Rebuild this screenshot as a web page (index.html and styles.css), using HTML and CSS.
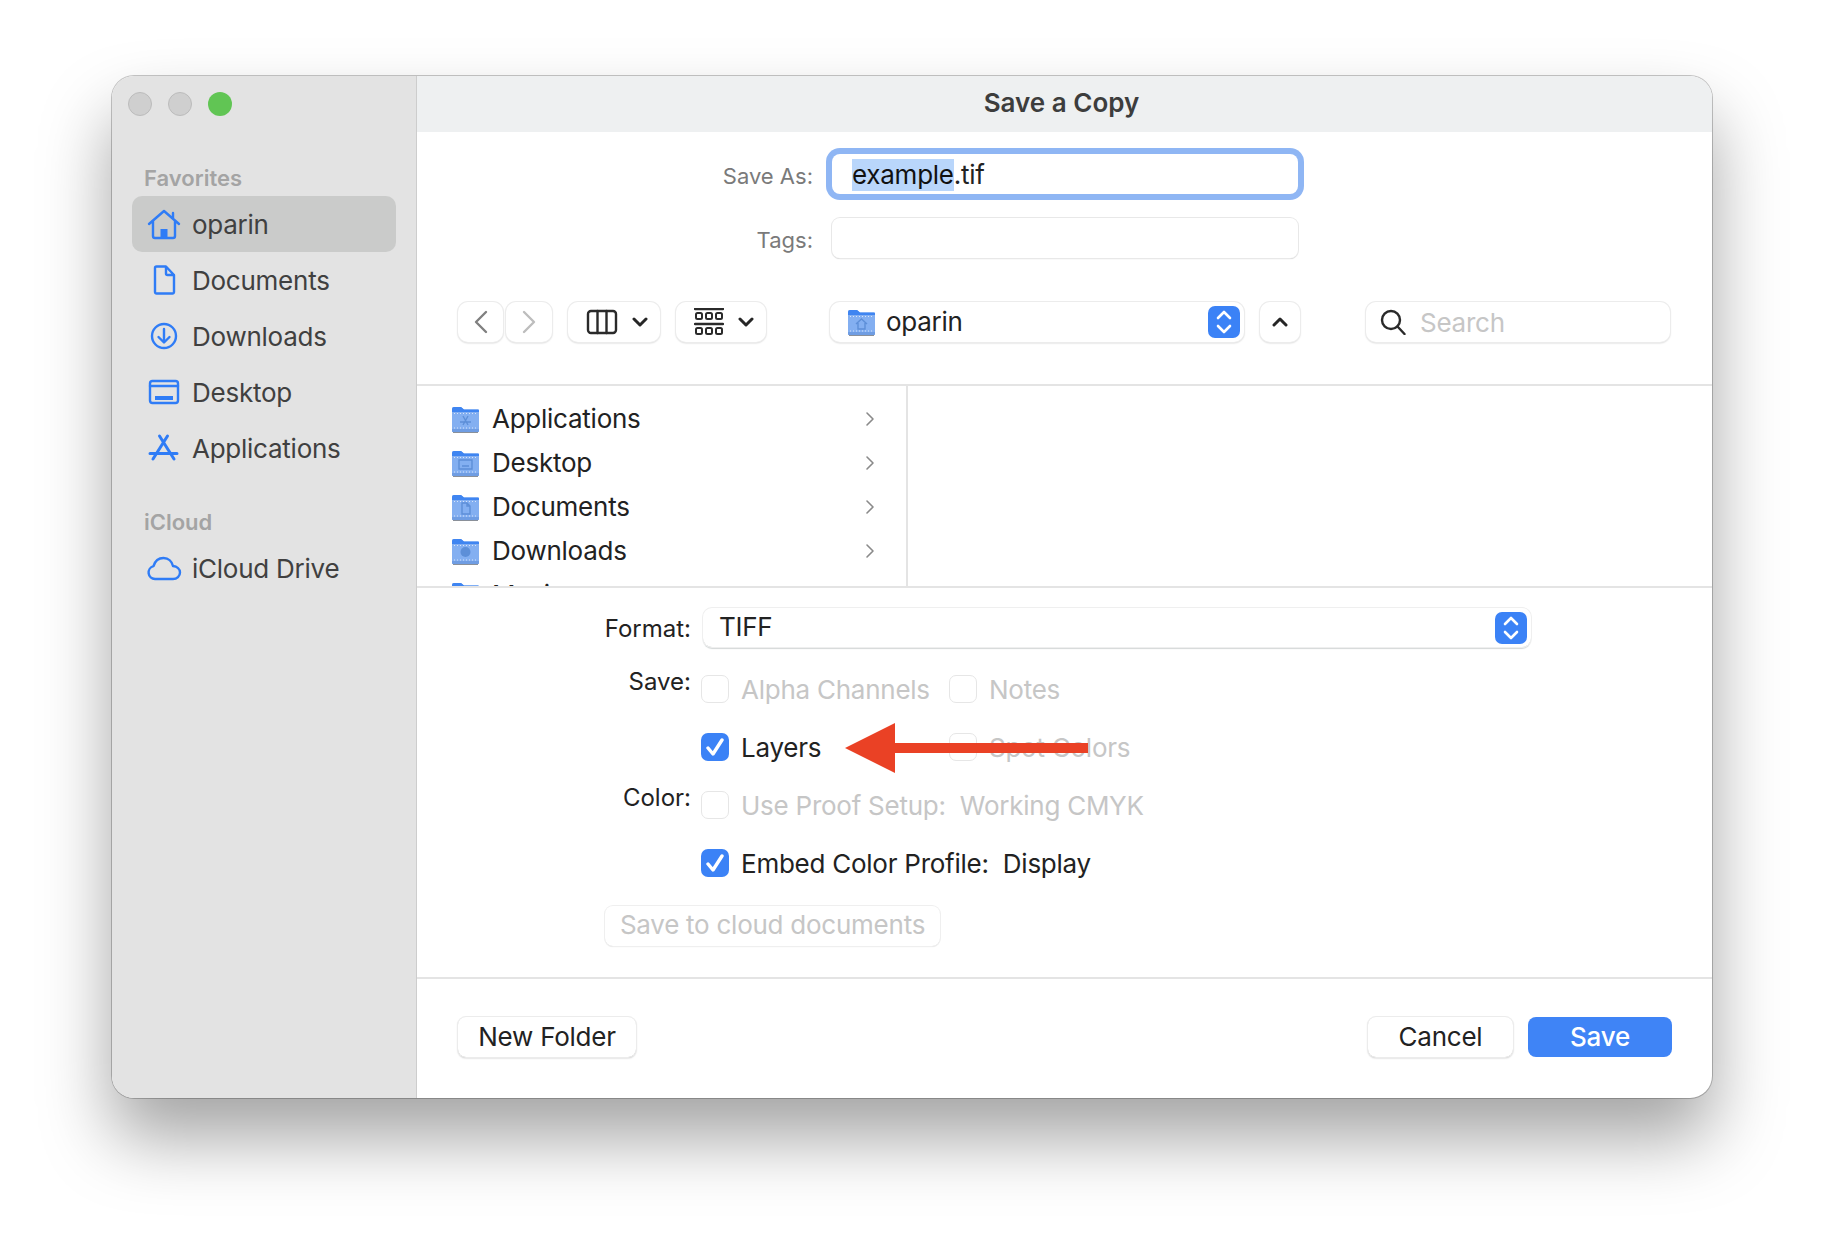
FILE: index.html
```html
<!doctype html>
<html>
  <head>
    <meta charset="utf-8">
    <title>Save a Copy</title>
    <link rel="stylesheet" href="styles.css">
  </head>
  <body>
    <svg class="defs" width="0" height="0">
      <symbol id="folder" viewBox="0 0 29 28">
        <path d="M1 4a2 2 0 0 1 2-2h7l3 2.500h14a1 1 0 0 1 1 1V26a1 1 0 0 1-1 1H2a1 1 0 0 1-1-1z" fill="#83aff1"/>
        <path d="M1 4a2 2 0 0 1 2-2h7l3 2.500h14a1 1 0 0 1 1 1V7H1z" fill="#3f85f1"/>
        <path d="M1 24h27v2a1 1 0 0 1-1 1H2a1 1 0 0 1-1-1z" fill="#6f9de3"/>
        <path d="M2 27.500h25" stroke="#8a9099" stroke-width="1"/>
        <path d="M3 8.500h23M3 23h23" stroke="#d6e4fa" stroke-width="1" stroke-dasharray="1 2"/>
      </symbol>
    </svg>

    <div class="window">
      <aside class="sidebar">
        <div class="lights">
          <span class="light"></span>
          <span class="light"></span>
          <span class="light light-green"></span>
        </div>
        <div class="side-head">Favorites</div>
        <div class="side-item selected">
          <svg class="side-icon" viewBox="0 0 36 32"><path d="M3 16 18 3l15 13M7 13v15a2 2 0 0 0 2 2h18a2 2 0 0 0 2-2V13M27 5v5" /><rect class="solid" x="14.500" y="21" width="7" height="9"/></svg>
          oparin
        </div>
        <div class="side-item">
          <svg class="side-icon" viewBox="0 0 36 32"><path d="M9 4a1.500 1.500 0 0 1 1.500-1.500H20L28 11v17a1.500 1.500 0 0 1-1.500 1.500h-16A1.500 1.500 0 0 1 9 28zM20 3v6.500a1.500 1.500 0 0 0 1.500 1.500H28"/></svg>
          Documents
        </div>
        <div class="side-item">
          <svg class="side-icon" viewBox="0 0 36 32"><circle cx="18" cy="16" r="12"/><path d="M18 9v13M12.500 17l5.500 5.500 5.500-5.500"/></svg>
          Downloads
        </div>
        <div class="side-item">
          <svg class="side-icon" viewBox="0 0 36 32"><rect x="4" y="5" width="28" height="22" rx="2.500"/><path d="M4 10h28"/><rect class="solid" x="9" y="20" width="18" height="4"/></svg>
          Desktop
        </div>
        <div class="side-item">
          <svg class="side-icon" viewBox="0 0 36 32"><path d="M13.500 4 28 27M21.500 4 7 27M4 21.500h27" stroke-width="3"/></svg>
          Applications
        </div>
        <div class="side-head side-head-second">iCloud</div>
        <div class="side-item side-item-cloud">
          <svg class="side-icon" viewBox="0 0 36 32"><path d="M9 27a6.500 6.500 0 0 1-1.500-12.800C9 9 13 6 17.500 6c5 0 8.500 3.500 9.500 8 4 .5 7 3 7 6.500S31 27 27 27z"/></svg>
          iCloud Drive
        </div>
      </aside>

      <main class="main">
        <header class="titlebar">Save a Copy</header>

        <section class="top">
          <div class="name-row">
            <label class="name-label">Save As:</label>
            <div class="field field-focus"><span class="selection">example</span>.tif</div>
          </div>
          <div class="name-row tags-row">
            <label class="name-label">Tags:</label>
            <div class="field"></div>
          </div>
          <div class="toolbar">
            <div class="tool tool-back">
              <svg width="14" height="24" viewBox="0 0 14 24"><path class="chev-gray" d="M12 2 2 12l10 10"/></svg>
            </div>
            <div class="tool tool-fwd">
              <svg width="14" height="24" viewBox="0 0 14 24"><path class="chev-light" d="M2 2l10 10L2 22"/></svg>
            </div>
            <div class="tool tool-view">
              <svg width="32" height="26" viewBox="0 0 32 26"><rect class="line" x="2" y="2" width="28" height="22" rx="3"/><path class="line" d="M11.500 2v22M20.500 2v22"/></svg>
              <svg width="16" height="10" viewBox="0 0 16 10"><path class="chev-bold" d="M2 2l6 6 6-6"/></svg>
            </div>
            <div class="tool tool-group">
              <svg width="30" height="28" viewBox="0 0 30 28">
                <path class="line" d="M1 1h28M1 16h28"/>
                <rect class="line-thin" x="2" y="5" width="6" height="6" rx="1.500"/><rect class="line-thin" x="12" y="5" width="6" height="6" rx="1.500"/><rect class="line-thin" x="22" y="5" width="6" height="6" rx="1.500"/>
                <rect class="line-thin" x="2" y="20" width="6" height="6" rx="1.500"/><rect class="line-thin" x="12" y="20" width="6" height="6" rx="1.500"/><rect class="line-thin" x="22" y="20" width="6" height="6" rx="1.500"/>
              </svg>
              <svg width="16" height="10" viewBox="0 0 16 10"><path class="chev-bold" d="M2 2l6 6 6-6"/></svg>
            </div>
            <div class="tool tool-place">
              <svg class="folder" viewBox="0 0 29 28"><use href="#folder"/><path class="glyph" d="M9 16l5.500-5 5.500 5M11 15v6h7v-6"/></svg>
              <span class="place-name">oparin</span>
              <span class="stepper">
                <svg width="18" height="26" viewBox="0 0 18 26"><path d="M3 9l6-6 6 6M3 17l6 6 6-6"/></svg>
              </span>
            </div>
            <div class="tool tool-up">
              <svg width="16" height="10" viewBox="0 0 16 10"><path class="chev-bold" d="M2 8l6-6 6 6"/></svg>
            </div>
            <div class="tool tool-search">
              <svg width="26" height="26" viewBox="0 0 26 26"><circle class="line" cx="11" cy="11" r="9"/><path class="line" d="M17.500 17.500 24.500 25"/></svg>
              <span class="search-text">Search</span>
            </div>
          </div>
        </section>

        <section class="browser">
          <div class="browser-col">
            <div class="browser-row">
              <svg class="folder" viewBox="0 0 29 28"><use href="#folder"/><path class="glyph" d="M12 11l5 9M17 11l-5 9M9 17h11"/></svg>
              <span class="browser-name">Applications</span>
              <svg class="browser-chev" width="10" height="16" viewBox="0 0 10 16"><path d="M2 2l6 6-6 6"/></svg>
            </div>
            <div class="browser-row">
              <svg class="folder" viewBox="0 0 29 28"><use href="#folder"/><path class="glyph" d="M8 11h13v9H8zM11 17h7"/></svg>
              <span class="browser-name">Desktop</span>
              <svg class="browser-chev" width="10" height="16" viewBox="0 0 10 16"><path d="M2 2l6 6-6 6"/></svg>
            </div>
            <div class="browser-row">
              <svg class="folder" viewBox="0 0 29 28"><use href="#folder"/><path class="glyph" d="M11 10h5l3 3v8h-8zM16 10v3h3"/></svg>
              <span class="browser-name">Documents</span>
              <svg class="browser-chev" width="10" height="16" viewBox="0 0 10 16"><path d="M2 2l6 6-6 6"/></svg>
            </div>
            <div class="browser-row">
              <svg class="folder" viewBox="0 0 29 28"><use href="#folder"/><circle class="glyph-fill" cx="14.500" cy="15" r="5"/></svg>
              <span class="browser-name">Downloads</span>
              <svg class="browser-chev" width="10" height="16" viewBox="0 0 10 16"><path d="M2 2l6 6-6 6"/></svg>
            </div>
            <div class="browser-row">
              <svg class="folder" viewBox="0 0 29 28"><use href="#folder"/></svg>
              <span class="browser-name">Music</span>
              <svg class="browser-chev" width="10" height="16" viewBox="0 0 10 16"><path d="M2 2l6 6-6 6"/></svg>
            </div>
          </div>
          <div class="browser-rest"></div>
        </section>

        <section class="options">
          <div class="opt-grid">
            <div class="opt-label opt-label-format">Format:</div>
            <div class="format-box">
              <span>TIFF</span>
              <span class="stepper">
                <svg width="18" height="26" viewBox="0 0 18 26"><path d="M3 9l6-6 6 6M3 17l6 6 6-6"/></svg>
              </span>
            </div>

            <div class="opt-label">Save:</div>
            <div class="check-row">
              <div class="check off"><span class="box"></span>Alpha Channels</div>
              <div class="check off"><span class="box"></span>Notes</div>
            </div>

            <div></div>
            <div class="check-row">
              <div class="check"><span class="box box-on"><svg width="18" height="18" viewBox="0 0 18 18"><path d="M2 10l5 6 9-14"/></svg></span>Layers</div>
              <div class="check off"><span class="box"></span>Spot Colors</div>
            </div>

            <div class="opt-label">Color:</div>
            <div class="check-row">
              <div class="check off"><span class="box"></span>Use Proof Setup:&nbsp; Working CMYK</div>
            </div>

            <div></div>
            <div class="check-row">
              <div class="check"><span class="box box-on"><svg width="18" height="18" viewBox="0 0 18 18"><path d="M2 10l5 6 9-14"/></svg></span>Embed Color Profile:&nbsp; Display</div>
            </div>
          </div>
          <div class="cloud-btn">Save to cloud documents</div>
        </section>

        <footer class="footer">
          <div class="btn btn-new">New Folder</div>
          <div class="footer-right">
            <div class="btn btn-cancel">Cancel</div>
            <div class="btn btn-save">Save</div>
          </div>
        </footer>
      </main>

      <svg class="arrow" width="243" height="50" viewBox="0 0 243 50"><path d="M0 25 50 0v20h193v10H50v20z"/></svg>
    </div>
  </body>
</html>
```

FILE: styles.css
```css
html,
body {
  margin: 0;
  padding: 0;
  background: #fff;
}
body {
  padding: 76px 112px 148px;
  font-family: "Inter", "Liberation Sans", sans-serif;
  font-size: 26px;
  letter-spacing: -0.25px;
  color: #222;
}
.defs {
  position: absolute;
}
.window {
  position: relative;
  display: flex;
  width: 1600px;
  height: 1022px;
  border-radius: 22px;
  overflow: visible;
  background: #fff;
  box-shadow: 0 0 0 1px rgba(0,0,0,.22), 0 40px 70px rgba(0,0,0,.36);
}

/* sidebar */
.sidebar {
  box-sizing: border-box;
  flex: none;
  width: 305px;
  padding: 16px 20px 0 20px;
  background: #e3e3e3;
  border-right: 1px solid #cdcdcd;
  border-radius: 22px 0 0 22px;
  color: #404040;
}
.lights {
  display: flex;
  gap: 16px;
  margin: 0 0 50px -4px;
}
.light {
  box-sizing: border-box;
  width: 24px;
  height: 24px;
  border-radius: 50%;
  background: #cfcfcf;
  border: 1px solid #bcbcbc;
}
.light-green {
  background: #61c554;
  border: none;
}
.side-head {
  height: 24px;
  margin: 0 0 6px 12px;
  font-size: 22px;
  line-height: 24px;
  font-weight: 600;
  letter-spacing: 0;
  color: #a4a4a4;
}
.side-head-second {
  margin-top: 34px;
  margin-bottom: 6px;
}
.side-item {
  display: flex;
  align-items: center;
  gap: 10px;
  height: 56px;
  padding-left: 14px;
  border-radius: 10px;
}
.side-item.selected {
  background: #cacbca;
}
.side-icon {
  flex: none;
  width: 36px;
  height: 32px;
  fill: none;
  stroke: #2f7cf6;
  stroke-width: 2.4;
  stroke-linecap: round;
  stroke-linejoin: round;
}
.side-icon .solid {
  fill: #2f7cf6;
  stroke: none;
}

/* main column */
.main {
  display: flex;
  flex-direction: column;
  flex: 1;
  min-width: 0;
}
.titlebar {
  box-sizing: border-box;
  height: 56px;
  padding-right: 6px;
  background: #eef0f1;
  border-radius: 0 22px 0 0;
  text-align: center;
  line-height: 54px;
  font-weight: 600;
  letter-spacing: 0;
  color: #3d3d3d;
}
.top {
  height: 254px;
  padding-top: 22px;
  box-sizing: border-box;
  border-bottom: 2px solid #e4e4e4;
}
.name-row {
  display: flex;
  align-items: center;
  gap: 19px;
  height: 40px;
}
.tags-row {
  height: 40px;
  margin-top: 24px;
}
.name-label {
  width: 396px;
  padding-top: 4px;
  text-align: right;
  font-size: 22px;
  letter-spacing: 0;
  color: #7a7a7a;
}
.field {
  box-sizing: border-box;
  width: 466px;
  height: 100%;
  padding-left: 20px;
  line-height: 41px;
  border-radius: 8px;
  background: #fff;
  box-shadow: 0 0 0 1px #e8e8e8, 0 1px 1px #c4c4c4;
  color: #222;
}
.field-focus {
  box-shadow: 0 0 0 6px #8fb6f4;
}
.selection {
  display: inline-block;
  height: 32px;
  line-height: 32px;
  background: #b9d6fb;
  color: #111;
}
.toolbar {
  display: flex;
  align-items: center;
  height: 40px;
  margin-top: 44px;
  padding-left: 41px;
}
.tool {
  box-sizing: border-box;
  display: flex;
  align-items: center;
  justify-content: center;
  flex: none;
  height: 40px;
  border-radius: 10px;
  background: #fff;
  box-shadow: 0 0 0 1px #ececec, 0 1px 2px #bdbdbd;
}
.tool-back { width: 45px; margin-right: 3px; }
.tool-fwd { width: 46px; margin-right: 16px; }
.tool-view { width: 92px; margin-right: 16px; gap: 14px; padding-left: 6px; }
.tool-group { width: 90px; margin-right: 64px; gap: 14px; padding-left: 6px; }
.tool-place {
  justify-content: flex-start;
  width: 414px;
  margin-right: 16px;
  padding: 0 4px 0 17px;
}
.tool-up { width: 40px; margin-right: 66px; }
.tool-search {
  justify-content: flex-start;
  width: 304px;
  padding-left: 14px;
  gap: 14px;
}
.place-name {
  flex: 1;
  margin: 0 0 2px 10px;
}
.search-text {
  color: #c6c6c6;
}
.folder {
  flex: none;
  width: 29px;
  height: 28px;
}
.glyph {
  fill: none;
  stroke: #5d8fd8;
  stroke-width: 1.400;
}
.glyph-fill {
  fill: #5d8fd8;
}
.line {
  fill: none;
  stroke: #2a2a2a;
  stroke-width: 2.400;
  stroke-linecap: round;
}
.line-thin {
  fill: none;
  stroke: #2a2a2a;
  stroke-width: 2;
}
.chev-gray,
.chev-light,
.chev-bold {
  fill: none;
  stroke-linecap: round;
  stroke-linejoin: round;
}
.chev-gray { stroke: #808080; stroke-width: 2.400; }
.chev-light { stroke: #bdbdbd; stroke-width: 2.400; }
.chev-bold { stroke: #262626; stroke-width: 3; }
.stepper {
  display: flex;
  align-items: center;
  justify-content: center;
  flex: none;
  width: 32px;
  height: 32px;
  border-radius: 7px;
  background: #3b82f6;
}
.stepper path {
  fill: none;
  stroke: #fff;
  stroke-width: 2.600;
  stroke-linecap: round;
  stroke-linejoin: round;
}

/* column browser */
.browser {
  display: flex;
  height: 202px;
  box-sizing: border-box;
  border-bottom: 2px solid #e4e4e4;
  overflow: hidden;
}
.browser-col {
  box-sizing: border-box;
  flex: none;
  width: 491px;
  padding: 11px 0 0 34px;
  border-right: 2px solid #e4e4e4;
}
.browser-row {
  display: flex;
  align-items: center;
  height: 44px;
  gap: 12px;
}
.browser-name {
  flex: 1;
  margin-bottom: 2px;
}
.browser-chev {
  margin-right: 31px;
}
.browser-chev path {
  fill: none;
  stroke: #8a8a8a;
  stroke-width: 1.600;
  stroke-linecap: round;
  stroke-linejoin: round;
}

/* format options */
.options {
  box-sizing: border-box;
  height: 391px;
  padding-top: 20px;
  border-bottom: 2px solid #e4e4e4;
}
.opt-grid {
  display: grid;
  grid-template-columns: 274px 1fr;
  column-gap: 10px;
  row-gap: 30px;
}
.opt-label {
  margin-top: -1px;
  text-align: right;
  font-size: 24px;
  line-height: 16px;
  letter-spacing: 0;
  color: #222;
}
.opt-label-format {
  height: 37px;
  margin-top: 0;
  line-height: 42px;
}
.format-box {
  display: flex;
  align-items: center;
  justify-content: space-between;
  box-sizing: border-box;
  width: 828px;
  height: 39px;
  margin: 0 0 -2px 2px;
  padding: 0 4px 0 16px;
  border-radius: 9px;
  box-shadow: 0 0 0 1px #efefef, 0 2px 1px #d4d8d8;
}
.format-box > span:first-child {
  margin-bottom: 3px;
}
.check-row {
  display: flex;
  height: 28px;
}
.check {
  display: flex;
  align-items: center;
  gap: 12px;
  min-width: 248px;
  white-space: nowrap;
}
.check.off {
  color: #c6c6c6;
}
.box {
  box-sizing: border-box;
  display: flex;
  align-items: center;
  justify-content: center;
  flex: none;
  width: 28px;
  height: 28px;
  border-radius: 7px;
  background: #fff;
  border: 1px solid #e6e6e6;
}
.box-on {
  background: #3b82f6;
  border: none;
}
.box-on path {
  fill: none;
  stroke: #fff;
  stroke-width: 3.400;
  stroke-linecap: round;
  stroke-linejoin: round;
}
.cloud-btn {
  box-sizing: border-box;
  width: 335px;
  height: 40px;
  margin: 29px 0 0 188px;
  line-height: 38px;
  text-align: center;
  color: #c6c6c6;
  border-radius: 8px;
  box-shadow: 0 0 0 1px #efefef, 0 1px 1px #dedede;
}

/* footer */
.footer {
  display: flex;
  justify-content: space-between;
  padding: 38px 40px 0 41px;
}
.footer-right {
  display: flex;
  gap: 15px;
}
.btn {
  box-sizing: border-box;
  height: 40px;
  line-height: 39px;
  text-align: center;
  border-radius: 8px;
  box-shadow: 0 0 0 1px #ececec, 0 1px 2px #b4b4b4;
}
.btn-new { width: 178px; }
.btn-cancel { width: 145px; }
.btn-save {
  width: 144px;
  background: #3f84f6;
  color: #fff;
  font-weight: 500;
  box-shadow: none;
}

/* annotation arrow over the dialog */
.arrow {
  position: absolute;
  left: 733px;
  top: 647px;
}
.arrow path {
  fill: #ea4125;
}
```
